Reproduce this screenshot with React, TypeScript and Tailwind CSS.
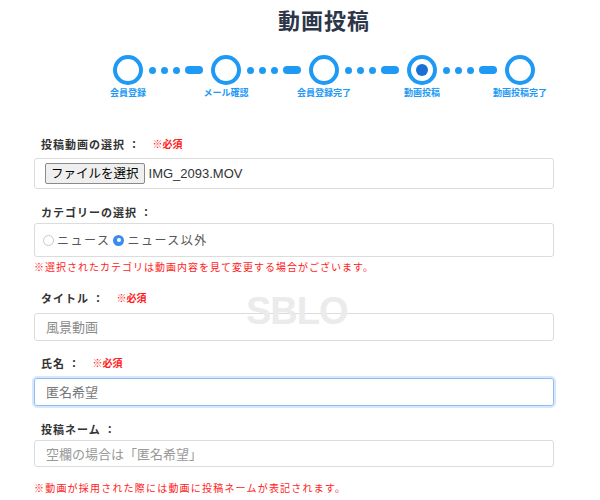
import React from "react";

const steps = ["会員登録", "メール確認", "会員登録完了", "動画投稿", "動画投稿完了"];

const Connector = () => (
  <div className="flex items-center gap-[5px] ml-[6px] mr-[8px]">
    <span className="w-[7px] h-[7px] rounded-full bg-[#1e9af5]" />
    <span className="w-[7px] h-[7px] rounded-full bg-[#1e9af5]" />
    <span className="w-[7px] h-[7px] rounded-full bg-[#1e9af5]" />
    <span className="w-[18px] h-[8px] rounded-full bg-[#1e9af5]" />
  </div>
);

const Label = ({ text, required }: { text: string; required?: boolean }) => (
  <div className="flex items-center pl-[7px] h-[16px] leading-[16px]">
    <span className="text-[11px] font-bold tracking-[1px] text-[#333]">{text}</span>
    {required && (
      <span className="ml-3 text-[10px] font-bold text-[#ff1a1a]">※必須</span>
    )}
  </div>
);

const Radio = ({ checked, text }: { checked?: boolean; text: string }) => (
  <div className="flex items-center">
    {checked ? (
      <span className="w-[11px] h-[11px] rounded-full bg-[#3b8cf0] flex items-center justify-center">
        <span className="w-[4px] h-[4px] rounded-full bg-white" />
      </span>
    ) : (
      <span className="w-[11px] h-[11px] rounded-full border border-[#c8c8c8] bg-white" />
    )}
    <span className="ml-[3px] text-[12px] tracking-[1.5px] text-[#555]">{text}</span>
  </div>
);

const App = () => {
  return (
    <div
      className="relative w-[600px] h-[500px] overflow-hidden bg-white"
      style={{ fontFamily: '"Noto Sans CJK JP", "Noto Sans", sans-serif' }}
    >
      <h1 className="pl-[48px] mt-[5px] text-center text-[22px] leading-[28px] font-bold tracking-[1px] text-[#2d3648]">
        動画投稿
      </h1>

      <div className="flex items-start pl-[113px] mt-[22px]">
        {steps.map((s, i) => (
          <React.Fragment key={s}>
            <div className="flex flex-col items-center w-[30px]">
              <div className="w-[30px] h-[30px] rounded-full border-4 border-[#1e9af5] flex items-center justify-center">
                {i === 3 && <span className="w-[12px] h-[12px] rounded-full bg-[#1a6fd6]" />}
              </div>
              <span className="mt-[3px] whitespace-nowrap text-[9px] leading-[10px] font-bold text-[#1e9af5]">
                {s}
              </span>
            </div>
            {i < steps.length - 1 && (
              <div className="h-[30px] flex items-center">
                <Connector />
              </div>
            )}
          </React.Fragment>
        ))}
      </div>

      <div className="ml-[34px] w-[520px] mt-[38px]">
        <Label text="投稿動画の選択 ：" required />
        <div className="mt-[6px] h-[31px] border border-[#dcdcdc] rounded-[3px] flex items-center pl-[10px]">
          <span className="h-[21px] px-[5px] flex items-center border border-[#8a8a8a] rounded-[2px] bg-[#efefef] text-[12.5px] text-black">
            ファイルを選択
          </span>
          <span className="ml-[4px] text-[13px] text-[#333]" style={{ fontFamily: '"Liberation Sans", sans-serif' }}>
            IMG_2093.MOV
          </span>
        </div>

        <div className="mt-[15px]">
          <Label text="カテゴリーの選択 ：" />
        </div>
        <div className="mt-[3px] h-[34px] border border-[#dcdcdc] rounded-[3px] flex items-center pl-[8px] gap-[3px]">
          <Radio text="ニュース" />
          <Radio checked text="ニュース以外" />
        </div>
        <p className="mt-[3px] text-[10px] leading-[14px] tracking-[1px] text-[#ff1a1a]">
          ※選択されたカテゴリは動画内容を見て変更する場合がございます。
        </p>

        <div className="mt-[16px]">
          <Label text="タイトル ：" required />
        </div>
        <div className="mt-[7px] h-[28px] border border-[#dcdcdc] rounded-[3px] flex items-center pl-[11px] text-[13px] text-[#8a8a8a]">
          風景動画
        </div>

        <div className="mt-[14px]">
          <Label text="氏名 ：" required />
        </div>
        <div className="mt-[7px] h-[28px] border border-[#8fbdf2] rounded-[3px] shadow-[0_0_0_2px_#d6e8fc] flex items-center pl-[11px] text-[13px] text-[#777]">
          匿名希望
        </div>

        <div className="mt-[15px]">
          <Label text="投稿ネーム ：" />
        </div>
        <div className="mt-[3px] h-[27px] border border-[#dcdcdc] rounded-[3px] flex items-center pl-[11px] text-[13px] text-[#999]">
          空欄の場合は「匿名希望」
        </div>
        <p className="mt-[14px] text-[10px] leading-[14px] tracking-[1.2px] text-[#ff1a1a]">
          ※動画が採用された際には動画に投稿ネームが表記されます。
        </p>
      </div>

      <div
        className="pointer-events-none absolute left-[246px] top-[283px] text-[38px] font-bold tracking-[-1px] text-[#ebebeb]"
        style={{ fontFamily: '"Liberation Sans", Arial, sans-serif' }}
      >
        SBLO
      </div>
    </div>
  );
};

export default App;
